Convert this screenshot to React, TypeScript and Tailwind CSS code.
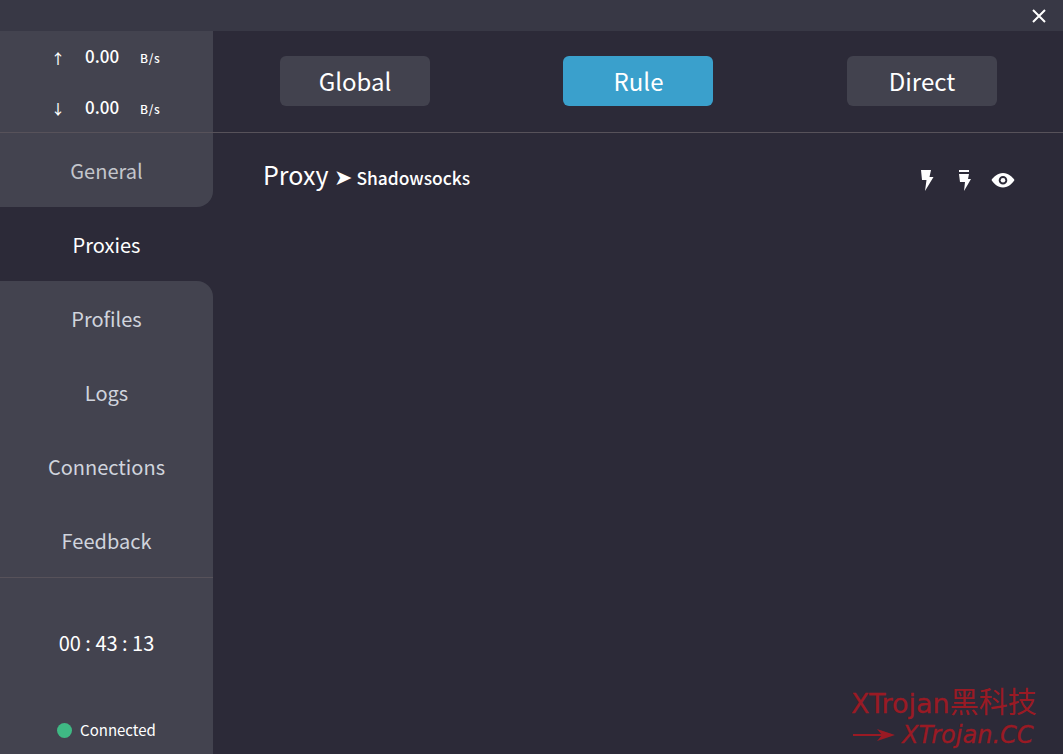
const NAV_FONT = "font-['Noto_Sans_CJK_SC','Noto_Sans',sans-serif]";

const Bolt = ({ bar }: { bar?: boolean }) => (
    <svg width="14" height="24" viewBox="0 0 14 24" className="block">
        {bar && <rect x="2" y="1" width="10" height="2" fill="#fff" />}
        <path d={bar ? "M2 5h10l-1 5h3L7 22l1-9H3z" : "M1 1h10l-1.500 7h4L5 22l1.500-11H2z"} fill="#fff" />
    </svg>
);

const Eye = () => (
    <svg width="24" height="16" viewBox="0 0 24 16" className="block">
        <path fillRule="evenodd" d="M12 1C17.500 1 21.500 5 23.500 8 21.500 11 17.500 15.500 12 15.500S2.500 11 .5 8C2.500 5 6.500 1 12 1zm0 3a4.300 4.300 0 1 0 0 8.600A4.300 4.300 0 0 0 12 4z" fill="#fff" />
        <circle cx="12" cy="8.300" r="2.300" fill="#fff" />
    </svg>
);

const Stat = ({ arrow, top }: { arrow: string; top?: boolean }) => (
    <div className="flex items-center h-[50px] text-white">
        <span className="w-[12px] ml-[51px] text-[14px] font-medium text-center">{arrow}</span>
        <span className={`w-[34px] ml-[22px] text-[17px] font-medium leading-none ${top ? "-mt-[5px]" : "-mt-[3px]"}`}>0.00</span>
        <span className={`ml-[21px] text-[12px] font-medium tracking-[0.7px] leading-none ${top ? "" : "mt-[2px]"}`}>B/s</span>
    </div>
);

const NavItem = ({ label, className }: { label: string; className?: string }) => (
    <div className={`h-[74px] flex items-center justify-center pt-[2px] text-[20px] ${className ?? "text-[#d0d4dd]"}`}>{label}</div>
);

const ModeButton = ({ label, active }: { label: string; active?: boolean }) => (
    <div className={`w-[150px] h-[50px] rounded-[6px] flex items-center justify-center text-[24px] text-white ${active ? "bg-[#3aa0cc] pl-[1px]" : "bg-[#42424e]"}`}>
        {label}
    </div>
);

export default function App() {
    return (
        <div className={`relative w-[1063px] h-[754px] overflow-hidden flex flex-col bg-[#2c2a38] ${NAV_FONT}`}>
            <div className="h-[31px] shrink-0 bg-[#383845] flex items-center justify-end pr-[16px]">
                <svg width="16" height="16" viewBox="0 0 16 16" className="block">
                    <path d="M2 2l12 12M14 2L2 14" stroke="#fff" strokeWidth="2" />
                </svg>
            </div>
            <div className="flex-1 flex min-h-0">
                <aside className="w-[213px] shrink-0 flex flex-col">
                    <div className="bg-[#43434f] rounded-br-[16px]">
                        <div className="h-[102px] border-b border-[#57525a] pt-[2px]">
                            <Stat arrow="↑" top />
                            <Stat arrow="↓" />
                        </div>
                        <NavItem label="General" className="text-[#c4c6cc]" />
                    </div>
                    <NavItem label="Proxies" className="text-white" />
                    <div className="flex-1 bg-[#43434f] rounded-tr-[16px] flex flex-col">
                        <NavItem label="Profiles" />
                        <NavItem label="Logs" />
                        <NavItem label="Connections" />
                        <NavItem label="Feedback" />
                        <div className="flex-1 border-t border-[#57525a] flex flex-col items-center text-white">
                            <div className="mt-[50px] text-[20px] leading-[30px]">00 : 43 : 13</div>
                            <div className="mt-[61px] flex items-center gap-[8px] text-[15px] leading-[22px]">
                                <span className="w-[15px] h-[15px] rounded-full bg-[#3fb984]" />
                                Connected
                            </div>
                        </div>
                    </div>
                </aside>
                <main className="flex-1 min-w-0">
                    <div className="h-[102px] border-b border-[#57525a] flex items-center pl-[67px] pb-[1px]">
                        <ModeButton label="Global" />
                        <div className="ml-[133px]"><ModeButton label="Rule" active /></div>
                        <div className="ml-[134px]"><ModeButton label="Direct" /></div>
                    </div>
                    <div className="flex items-start pl-[50px] pr-[48px] pt-[24px] text-white">
                        <span className="text-[25px] leading-[38px] -mt-[2px]">Proxy</span>
                        <span className="ml-[6px] text-[22px] leading-[38px] -mt-[1px]">➤</span>
                        <span className="ml-[4px] text-[17.4px] font-medium leading-[38px] mt-[2px]">Shadowsocks</span>
                        <div className="ml-auto flex items-center pt-[12px]">
                            <Bolt />
                            <div className="ml-[23px]"><Bolt bar /></div>
                            <div className="ml-[20px] -mt-[2px]"><Eye /></div>
                        </div>
                    </div>
                </main>
            </div>
            <div className="absolute left-[851px] top-[686px] text-[#9a1a24]">
                <div className="text-[27px] leading-[34px] font-['DejaVu_Sans','Noto_Sans_CJK_SC',sans-serif] whitespace-nowrap [-webkit-text-stroke:0.3px_#9a1a24]">
                    XTrojan<span className="text-[29px] [-webkit-text-stroke:0]">黑科技</span>
                </div>
                <div className="flex items-center h-[27px]">
                    <svg width="42" height="14" viewBox="0 0 42 14" className="block ml-[2px]">
                        <path d="M0 6h32v2H0z" fill="#9a1a24" />
                        <path d="M24 1l18 6-18 6 5-6z" fill="#9a1a24" />
                    </svg>
                    <span className="ml-[7px] text-[24px] italic font-['DejaVu_Sans',sans-serif] whitespace-nowrap [-webkit-text-stroke:0.3px_#9a1a24]">XTrojan.CC</span>
                </div>
            </div>
        </div>
    );
}
